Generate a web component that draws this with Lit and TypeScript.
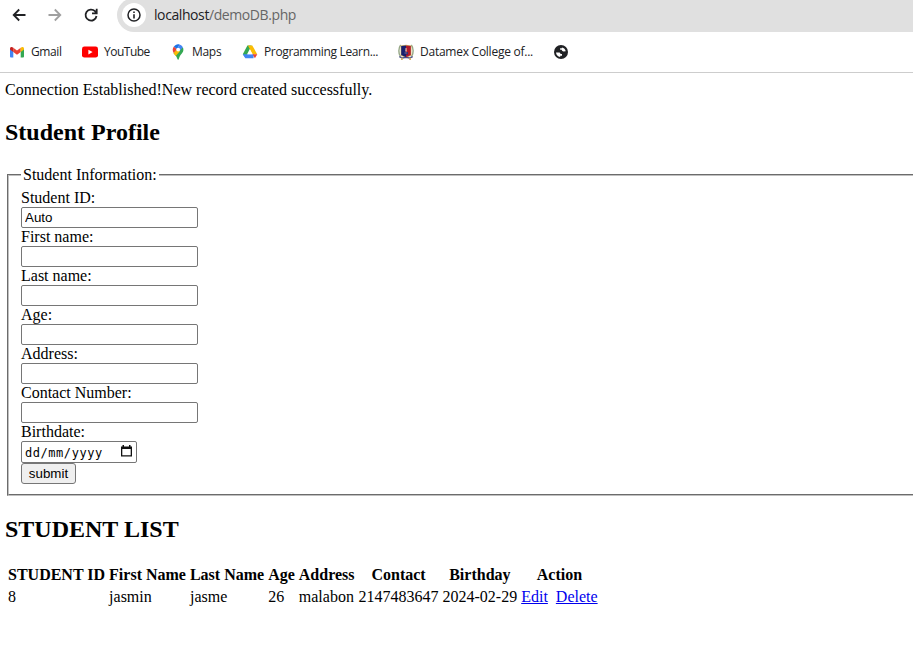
import { LitElement, html, css, svg } from "lit";
import { customElement } from "lit/decorators.js";

const gmail = svg`<svg width="16" height="16" viewBox="0 0 16 16">
  <path fill="#4285f4" d="M1 4.5 4.3 7v6.5H2a1 1 0 0 1-1-1z"/>
  <path fill="#34a853" d="M11.7 7 15 4.5v8a1 1 0 0 1-1 1h-2.3z"/>
  <path fill="#ea4335" d="M4.3 3.8 8 6.6l3.7-2.8V8L8 10.8 4.3 8z"/>
  <path fill="#c5221f" d="M1 4.5C1 2.7 3 2.3 4.3 3.8V8L1 5.5z"/>
  <path fill="#fbbc04" d="M15 4.5c0-1.8-2-2.2-3.3-.7V8L15 5.5z"/></svg>`;
const youtube = svg`<svg width="16" height="16" viewBox="0 0 16 16">
  <rect x="0" y="2.6" width="16" height="11" rx="2.4" fill="#f00"/><path fill="#fff" d="M6.4 5.7v4.8l4.2-2.4z"/></svg>`;
const maps = svg`<svg width="16" height="16" viewBox="0 0 16 16">
  <path fill="#34a853" d="M3.5 9.2 12.8 3.2C14.6 7 12 9.2 10.4 11.2 9.3 12.7 9 15.8 8.2 15.8S7.1 13.2 6 11.9z"/>
  <path fill="#fbbc04" d="M3.5 9 7 4.8l3 2.4L5.7 12z"/>
  <path fill="#ea4335" d="M3.9 2.5 7 5.2 3.7 9C2.2 6.5 2.5 4.2 3.9 2.5z"/>
  <path fill="#1a73e8" d="M3.9 2.5 7 5.2 9.6.5C7.3-.4 5.2.8 3.9 2.5z"/>
  <path fill="#4285f4" d="M9.6.5 6.9 5 9.6 7l3.2-3.8C12.1 1.8 11 .9 9.6.5z"/>
  <circle cx="8.2" cy="5.6" r="1.9" fill="#fff"/></svg>`;
const drive = svg`<svg width="16" height="16" viewBox="0 0 16 16">
  <path fill="#34a853" d="M5.4 1.5h4.2L3.4 13.5.8 10.2z"/>
  <path fill="#fbbc04" d="M5.9 1.5h4.4l4.9 8.7h-4.5z"/>
  <path fill="#4285f4" d="M3.6 10.2h8.2l-.3 4H3.3L.8 10.2z"/>
  <path fill="#ea4335" d="M10.6 10.2h4.7l-2.4 4z"/>
  <path fill="#fff" d="m8 6 2.4 4.2H5.6z"/></svg>`;
const crest = svg`<svg width="16" height="16" viewBox="0 0 16 16">
  <path fill="none" stroke="#94a684" stroke-width="1.4" d="M2.7 1C.4 4 .2 9.500 2.500 12.500M13.300 1c2.300 3 2.500 8.500.2 11.500"/>
  <path fill="#d2b36a" d="M2.600 1.600 8 .8l5.400.8v10L8 14l-5.400-2.400z"/>
  <path fill="#17206f" d="M3.200 2.100 8 1.500v11.800L3.200 11z"/><path fill="#b01c2c" d="m8 1.500 4.800.6V11L8 13.300z"/>
  <path fill="#dcae9c" d="M7.500 4h1.100l.3 3.600H7.200z"/><path fill="#17206f" d="M6 8h4v2.500H6z"/><path fill="#dcae9c" d="M6.500 8.700h3v.6h-3z"/>
  <path fill="none" stroke="#4b4f84" stroke-width="1.400" d="m1.300 12.700 3 1.300L8 13.400l3.700.6 3-1.300"/>
  <path fill="#d2b36a" d="M3 13.800h1.800V16H3zM11.200 13.800H13V16h-1.800z"/></svg>`;
const globe = svg`<svg width="16" height="16" viewBox="0 0 16 16">
  <circle cx="8" cy="8" r="7" fill="#202124"/>
  <path fill="#fff" d="M3 8.400h2.700c1.300 0 1.800.6 1.800 1.700H9v1.700H7.200v1.100C4.900 12.500 3.200 10.800 3 8.400zM8.900 3.400v.9H7.100v1.500h1.600c.3 1.200.9 1.700 1.900 1.700l2.100-.3C12.500 5.400 11 3.700 8.900 3.400z"/></svg>`;

@customElement("app-root")
export class AppRoot extends LitElement {
  static styles = css`
    :host { display: block; width: 100%; height: 650px; overflow: hidden; background: #fff; color: #000; font: 16px/18px "Liberation Serif", serif; }
    svg { display: block; flex: none; }
    .toolbar { display: flex; height: 32px; overflow: hidden; font: 14px/18px "Open Sans", sans-serif; }
    .nav { display: flex; gap: 20px; padding: 7px 0 0 11px; width: 106px; box-sizing: content-box; }
    .address { flex: 1; display: flex; height: 34px; margin-top: -2px; border-radius: 17px 0 0 17px; background: #e0e0e0; box-sizing: border-box; padding: 5px 0 0 5px; }
    .info { width: 24px; height: 24px; border-radius: 50%; background: #fff; display: grid; place-items: center; }
    .url { margin: 3px 0 0 8px; color: #666; letter-spacing: -0.41px; white-space: nowrap; }
    .host { color: #202124; }
    .bookmarks { display: flex; height: 40px; border-bottom: 1px solid #cdcdcd; padding-left: 9px; font: 12px/16px "Open Sans", sans-serif; color: #202124; }
    .mark { display: flex; gap: 6px; padding-top: 12px; white-space: nowrap; box-sizing: border-box; }
    .w1 { width: 73px; letter-spacing: -0.4px; } .w2 { width: 88px; letter-spacing: -0.5px; } .w3 { width: 72px; letter-spacing: -0.3px; }
    .w4 { width: 156px; letter-spacing: -0.35px; } .w5 { width: 155px; letter-spacing: -0.25px; }
    .page { padding: 8px 0 0 5px; }
    h2 { font-size: 24px; line-height: 27px; margin: 20px 0; }
    fieldset { margin: 0 -20px 0 2px; padding: 5px 12px 10px; border: 2px groove #c0c0c0; min-width: 0; }
    legend { padding: 0 2px; }
    .input { display: block; box-sizing: border-box; width: 177px; height: 21px; border: 1px solid #767676; border-radius: 2px; padding: 1px 3px; background: #fff; font: 13.333px/17px "Liberation Sans", sans-serif; color: #000; margin: 0; outline: none; }
    .date { display: flex; box-sizing: border-box; width: 116px; height: 22px; border: 1px solid #767676; border-radius: 2px; padding: 2px 3px; justify-content: space-between; font: 12px/18px "DejaVu Sans Mono", monospace; letter-spacing: 0.55px; }
    .submit { display: block; box-sizing: border-box; width: 55px; height: 21px; margin: 0; padding: 0; border: 1px solid #767676; border-radius: 3px; background: #efefef; color: #000; font: 13.333px/17px "Liberation Sans", sans-serif; }
    table { border-spacing: 2px; border-collapse: separate; white-space: nowrap; }
    th, td { padding: 1px; }
    td { text-align: left; }
    a { color: #0000ee; text-decoration: underline; }
    .del { margin-left: 8px; }
  `;

  private field(label: string, value = "") {
    return html`<div>${label}</div><input class="input" .value=${value} />`;
  }

  render() {
    return html`
      <div class="toolbar">
        <div class="nav">
          <svg width="16" height="16" viewBox="0 0 16 16" fill="none" stroke="#202124" stroke-width="1.8"><path d="M14.500 8H3M8.200 2.500 2.700 8l5.500 5.500"/></svg>
          <svg width="16" height="16" viewBox="0 0 16 16" fill="none" stroke="#a0a0a0" stroke-width="1.800"><path d="M1.500 8H13M7.800 2.500 13.300 8l-5.500 5.500"/></svg>
          <svg width="16" height="16" viewBox="0 0 16 16" fill="none" stroke="#202124" stroke-width="1.800"><path d="M13.500 9A5.500 5.500 0 1 1 12 4.200L13 5.500M13.700 1.700v4.700H9"/></svg>
        </div>
        <div class="address">
          <div class="info"><svg width="14" height="14" viewBox="0 0 14 14"><circle cx="7" cy="7" r="6" fill="none" stroke="#202124" stroke-width="1.500"/><path fill="#202124" d="M6.200 3.500h1.600V5H6.200zM6.200 6.200h1.600v4.300H6.200z"/></svg></div>
          <div class="url"><span class="host">localhost</span>/demoDB.php</div>
        </div>
      </div>
      <div class="bookmarks">
        <div class="mark w1">${gmail}<span>Gmail</span></div>
        <div class="mark w2">${youtube}<span>YouTube</span></div>
        <div class="mark w3">${maps}<span>Maps</span></div>
        <div class="mark w4">${drive}<span>Programming Learn...</span></div>
        <div class="mark w5">${crest}<span>Datamex College of...</span></div>
        <div class="mark">${globe}</div>
      </div>
      <div class="page">
        <div>Connection Established!New record created successfully.</div>
        <h2>Student Profile</h2>
        <fieldset>
          <legend>Student Information:</legend>
          ${this.field("Student ID:", "Auto")}
          ${this.field("First name:")}
          ${this.field("Last name:")}
          ${this.field("Age:")}
          ${this.field("Address:")}
          ${this.field("Contact Number:")}
          <div>Birthdate:</div>
          <div class="date">
            <span>dd/mm/yyyy</span>
            <svg width="13" height="14" viewBox="0 0 13 14"><path fill="#111" fill-rule="evenodd" d="M1 2.500h1.500V1H4v1.500h5V1h1.500v1.500H12v10H1zM2.300 5v6.200h8.400V5z"/></svg>
          </div>
          <button class="submit">submit</button>
        </fieldset>
        <h2>STUDENT LIST</h2>
        <table>
          <tr><th>STUDENT ID</th><th>First Name</th><th>Last Name</th><th>Age</th><th>Address</th><th>Contact</th><th>Birthday</th><th>Action</th></tr>
          <tr><td>8</td><td>jasmin</td><td>jasme</td><td>26</td><td>malabon</td><td>2147483647</td><td>2024-02-29</td><td><a>Edit</a><a class="del">Delete</a></td></tr>
        </table>
      </div>
    `;
  }
}
